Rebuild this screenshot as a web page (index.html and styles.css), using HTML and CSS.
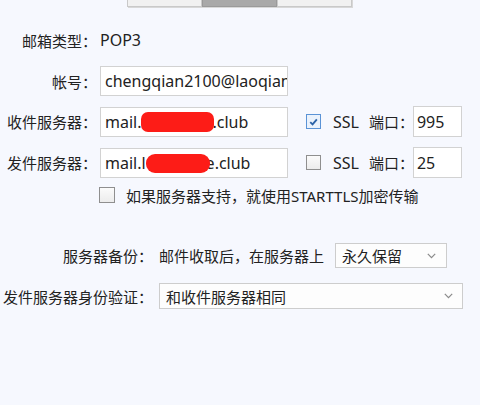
FILE: index.html
```html
<!DOCTYPE html>
<html lang="zh">
<head>
<meta charset="utf-8">
<link rel="stylesheet" href="styles.css">
</head>
<body>
<div class="tabs">
  <div class="tab">常规</div>
  <div class="tab active">服务器</div>
  <div class="tab">高级</div>
</div>
<div class="form">
  <div class="row r1">
    <div class="label">邮箱类型：</div>
    <div class="value">POP3</div>
  </div>
  <div class="row r2">
    <div class="label">帐号：</div>
    <div class="field main"><span class="txt">chengqian2100@laoqianxx.club</span></div>
  </div>
  <div class="row r3">
    <div class="label">收件服务器：</div>
    <div class="field main"><span class="txt">mail.<span class="redact r-a"></span>.club</span></div>
    <span class="check on"><svg width="14" height="14" viewBox="0 0 14 14"><path d="M3.5 7.2 L6 9.6 L10.6 4.2" fill="none" stroke="#2b63a8" stroke-width="2"/></svg></span>
    <span class="ssl">SSL</span>
    <span class="port-label">端口：</span>
    <div class="field port"><span class="txt">995</span></div>
  </div>
  <div class="row r4">
    <div class="label">发件服务器：</div>
    <div class="field main"><span class="txt">mail.l<span class="redact r-b"></span>e.club</span></div>
    <span class="check"></span>
    <span class="ssl">SSL</span>
    <span class="port-label">端口：</span>
    <div class="field port"><span class="txt">25</span></div>
  </div>
  <div class="row r5">
    <span class="check"></span>
    <span class="opt">如果服务器支持，就使用STARTTLS加密传输</span>
  </div>
  <div class="row r6">
    <div class="label wide">服务器备份：</div>
    <span class="desc">邮件收取后，在服务器上</span>
    <div class="select small"><span>永久保留</span><svg width="9" height="6" viewBox="0 0 9 6"><path d="M0.8 0.8 L4.5 4.6 L8.2 0.8" fill="none" stroke="#8a8a8a" stroke-width="1.2"/></svg></div>
  </div>
  <div class="row r7">
    <div class="label wide">发件服务器身份验证：</div>
    <div class="select big"><span>和收件服务器相同</span><svg width="9" height="6" viewBox="0 0 9 6"><path d="M0.8 0.8 L4.5 4.6 L8.2 0.8" fill="none" stroke="#8a8a8a" stroke-width="1.2"/></svg></div>
  </div>
</div>
</body>
</html>
```

FILE: styles.css
```css
html, body {
  margin: 0;
  padding: 0;
}
body {
  width: 480px;
  height: 405px;
  background: #f6f8fe;
  font-family: "Noto Sans", "Noto Sans CJK SC", sans-serif;
  font-size: 15px;
  color: #222;
  overflow: hidden;
}
.tabs {
  height: 8px;
  display: flex;
  padding-left: 127px;
  align-items: flex-end;
  overflow: hidden;
}
.tab {
  width: 75px;
  height: 24px;
  flex: none;
  box-sizing: border-box;
  background: #f1f1f1;
  border: 1px solid #c9c9c9;
  border-top: none;
  box-shadow: 1px 1px 0 #d8d8d8;
  font-size: 13px;
  line-height: 12px;
  text-align: center;
  color: #555;
  margin-bottom: 1px;
}
.tab.active {
  background: #a9a9a9;
  color: #eee;
  border-color: #9a9a9a;
}
.form {
  display: flex;
  flex-direction: column;
}
.row {
  display: flex;
  align-items: center;
}
.label {
  width: 97px;
  flex: none;
  text-align: right;
  white-space: nowrap;
}
.label.wide {
  width: 153px;
}
.r1 { height: 30px; margin-top: 17px; }
.r1 .value { margin-left: 3px; font-size: 16px; }
.r2 { margin-top: 11px; }
.r3 { margin-top: 10px; }
.r4 { margin-top: 10px; }
.r5 { margin-top: 8px; height: 18px; padding-left: 99px; }
.r6 { margin-top: 39px; }
.r7 { margin-top: 15px; }
.field {
  height: 30px;
  box-sizing: border-box;
  background: #fff;
  border: 1px solid #d2d2d2;
  display: flex;
  align-items: center;
  padding-left: 4px;
  overflow: hidden;
  white-space: nowrap;
  flex: none;
  font-size: 16px;
}
.field.main {
  width: 188px;
  margin-left: 3px;
}
.field.port {
  width: 49px;
  height: 31px;
  padding-left: 3px;
}
.txt {
  white-space: nowrap;
}
.redact {
  display: inline-block;
  position: relative;
  z-index: 1;
  background: #fd1c17;
  vertical-align: middle;
}
.r-a {
  width: 73px;
  height: 20px;
  border-radius: 7px;
  margin: -2px -2px 0 0;
}
.r-b {
  width: 64px;
  height: 19px;
  border-radius: 9px;
  margin: -1px -4px 0 0;
}
.check {
  width: 15px;
  height: 15px;
  flex: none;
  box-sizing: border-box;
  border: 1px solid #8f8f8f;
  background: linear-gradient(#fbfbfb, #ececec);
  display: inline-flex;
  align-items: center;
  justify-content: center;
}
.check svg {
  display: block;
}
.check.on {
  border-color: #5a93d6;
  background: #eaf2fc;
}
.r3 .check, .r4 .check {
  margin-left: 18px;
}
.ssl {
  margin-left: 12px;
  font-size: 16px;
}
.port-label {
  margin-left: 10px;
  white-space: nowrap;
}
.port-label + .field.port {
  margin-left: -1px;
}
.r5 .check {
  width: 16px;
  height: 16px;
}
.opt {
  margin-left: 11px;
  white-space: nowrap;
}
.desc {
  margin-left: 6px;
  white-space: nowrap;
}
.select {
  box-sizing: border-box;
  background: #fdfdfd;
  border: 1px solid #cdcdcd;
  display: flex;
  align-items: center;
  justify-content: space-between;
  flex: none;
}
.select.small {
  width: 112px;
  height: 25px;
  margin-left: 11px;
  padding: 0 10px 0 6px;
}
.select.big {
  width: 304px;
  height: 26px;
  margin-left: 6px;
  padding: 0 9px 0 6px;
}
.select svg {
  display: block;
}
```
